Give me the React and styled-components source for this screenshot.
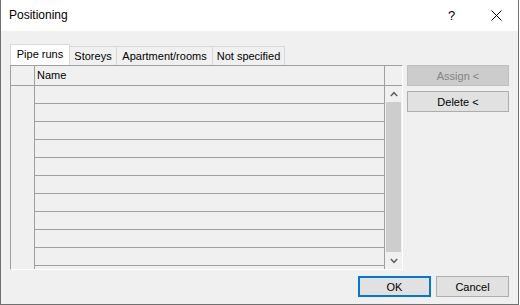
import React from 'react';
import styled, { createGlobalStyle } from 'styled-components';

const Global = createGlobalStyle`
  html, body { margin: 0; padding: 0; background: #ffffff; }
  body { font-family: "Liberation Sans", Arial, sans-serif; color: #000; }
  * { box-sizing: border-box; }
`;

const Window = styled.div`
  width: 519px;
  height: 305px;
  border: 1px solid #707070;
  border-top: none;
  background: #f0f0f0;
  display: flex;
  flex-direction: column;
`;

const TitleBar = styled.div`
  height: 31px;
  flex: none;
  background: #ffffff;
  display: flex;
  align-items: center;
  padding-left: 8px;
  font-size: 12px;
`;

const Title = styled.div`
  flex: 1;
  padding-bottom: 1px;
`;

const TitleButton = styled.div`
  width: ${p => p.$w}px;
  height: 31px;
  display: flex;
  align-items: center;
  justify-content: center;
  font-size: 13px;
  padding-bottom: 1px;
`;

const Body = styled.div`
  flex: 1;
  display: flex;
  flex-direction: column;
  padding: 13px 9px 7px 9px;
`;

const Main = styled.div`
  height: 226px;
  display: flex;
  align-items: flex-start;
`;

const TabArea = styled.div`
  width: 393px;
  height: 226px;
  display: flex;
  flex-direction: column;
`;

const TabStrip = styled.div`
  height: 21px;
  display: flex;
  align-items: flex-end;
`;

const Tab = styled.div`
  position: relative;
  width: ${p => p.$w}px;
  height: ${p => (p.$active ? 21 : 19)}px;
  margin-left: ${p => (p.$first ? 0 : -1)}px;
  border: 1px solid #d9d9d9;
  border-bottom: none;
  background: ${p => (p.$active ? '#ffffff' : '#f0f0f0')};
  z-index: ${p => (p.$active ? 2 : 1)};
  font-size: 11px;
  text-align: center;
  padding-top: 3px;
  white-space: nowrap;
`;

const Table = styled.div`
  height: 205px;
  border-top: 1px solid #a0a0a0;
  border-left: 1px solid #a0a0a0;
  border-right: 1px solid #ffffff;
  border-bottom: 1px solid #ffffff;
  display: flex;
  flex-direction: column;
  overflow: hidden;
`;

const HeaderRow = styled.div`
  height: 20px;
  flex: none;
  display: flex;
  border-bottom: 1px solid #a0a0a0;
`;

const BodyRow = styled.div`
  flex: 1;
  display: flex;
  min-height: 0;
`;

const RowHeadCol = styled.div`
  width: 24px;
  flex: none;
  border-right: 1px solid #a0a0a0;
`;

const NameCol = styled.div`
  width: 350px;
  flex: none;
  border-right: 1px solid #a0a0a0;
  overflow: hidden;
  font-size: 11px;
  padding: ${p => (p.$header ? '3px 0 0 2px' : '0')};
`;

const GridRow = styled.div`
  height: 18px;
  flex: none;
  border-bottom: 1px solid #a0a0a0;
`;

const ScrollCol = styled.div`
  width: 17px;
  flex: none;
  display: flex;
  flex-direction: column;
`;

const ScrollArrow = styled.div`
  height: ${p => p.$h}px;
  flex: none;
  display: flex;
  align-items: center;
  justify-content: center;
`;

const Thumb = styled.div`
  height: 150px;
  flex: none;
  margin: 0 1px;
  background: #cdcdcd;
`;

const SideButtons = styled.div`
  margin-left: 4px;
  margin-top: 21px;
  width: 102px;
  display: flex;
  flex-direction: column;
  gap: 5px;
`;

const Button = styled.div`
  width: ${p => p.$w || 102}px;
  height: 21px;
  display: flex;
  align-items: center;
  justify-content: center;
  font-size: 11px;
  background: ${p => (p.$disabled ? '#cccccc' : '#e1e1e1')};
  border: ${p => (p.$default ? '2px solid #0078d7' : p.$disabled ? '1px solid #bfbfbf' : '1px solid #adadad')};
  color: ${p => (p.$disabled ? '#838383' : '#000')};
`;

const Footer = styled.div`
  margin-top: 6px;
  height: 21px;
  display: flex;
  justify-content: flex-end;
  gap: 5px;
`;

const Chevron = ({ down }) => (
  <svg width="8" height="6" viewBox="0 0 8 6">
    <polyline
      points={down ? '0.8,1 4,4.3 7.2,1' : '0.8,5 4,1.7 7.2,5'}
      fill="none"
      stroke="#606060"
      strokeWidth="1.5"
    />
  </svg>
);

const CloseIcon = () => (
  <svg width="11" height="11" viewBox="0 0 11 11">
    <path d="M0.5 0.5 L10.5 10.5 M10.5 0.5 L0.5 10.5" stroke="#000" strokeWidth="1" fill="none" />
  </svg>
);

const tabs = [
  { label: 'Pipe runs', w: 60, active: true },
  { label: 'Storeys', w: 48 },
  { label: 'Apartment/rooms', w: 97 },
  { label: 'Not specified', w: 73 },
];

export default function App() {
  const rows = Array.from({ length: 11 });
  return (
    <>
      <Global />
      <Window>
        <TitleBar>
          <Title>Positioning</Title>
          <TitleButton $w={45}>?</TitleButton>
          <TitleButton $w={44}><CloseIcon /></TitleButton>
        </TitleBar>
        <Body>
          <Main>
            <TabArea>
              <TabStrip>
                {tabs.map((t, i) => (
                  <Tab key={t.label} $w={t.w} $active={t.active} $first={i === 0}>{t.label}</Tab>
                ))}
              </TabStrip>
              <Table>
                <HeaderRow>
                  <RowHeadCol />
                  <NameCol $header>Name</NameCol>
                  <ScrollCol />
                </HeaderRow>
                <BodyRow>
                  <RowHeadCol />
                  <NameCol>
                    {rows.map((_, i) => <GridRow key={i} />)}
                  </NameCol>
                  <ScrollCol>
                    <ScrollArrow $h={16}><Chevron /></ScrollArrow>
                    <Thumb />
                    <ScrollArrow $h={17}><Chevron down /></ScrollArrow>
                  </ScrollCol>
                </BodyRow>
              </Table>
            </TabArea>
            <SideButtons>
              <Button $disabled>Assign &lt;</Button>
              <Button>Delete &lt;</Button>
            </SideButtons>
          </Main>
          <Footer>
            <Button $w={73} $default>OK</Button>
            <Button $w={73}>Cancel</Button>
          </Footer>
        </Body>
      </Window>
    </>
  );
}
